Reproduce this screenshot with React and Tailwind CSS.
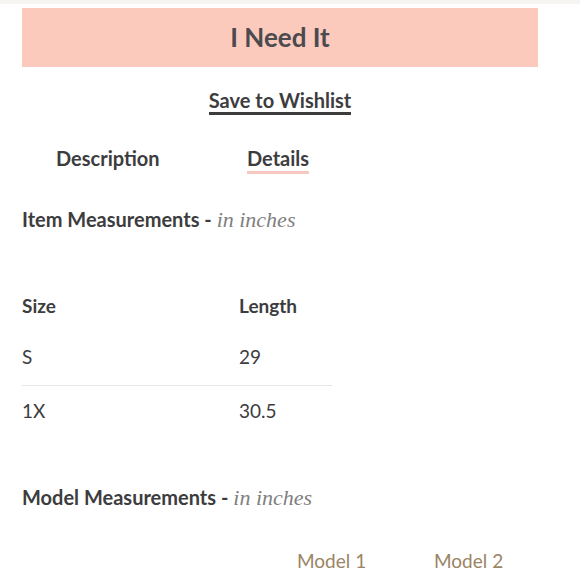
export default function App() {
  const sans = { fontFamily: '"Lato", "Noto Sans", sans-serif' };
  const serif = { fontFamily: '"Liberation Serif", "DejaVu Serif", serif' };
  return (
    <div className="w-[580px] h-[580px] overflow-hidden bg-white text-[#3d3c3e]" style={sans}>
      <div className="h-[4px] bg-[#f7f5f1]" />
      <div className="pl-[22px] pr-[42px] pt-[4px]">
        <div className="h-[59px] bg-[#fccabd] flex items-center justify-center">
          <span className="text-[26px] font-bold text-[#4b4a4f]">I Need It</span>
        </div>
        <div className="flex justify-center mt-[21px]">
          <span className="text-[20px] font-bold text-[#3d3c3e] border-b-[3px] border-[#3d3c3e] leading-[24px]">Save to Wishlist</span>
        </div>
        <div className="flex mt-[30px]">
          <div className="ml-[34px] w-[191px] text-[20px] font-bold leading-[26px]">Description</div>
          <div className="text-[20px] font-bold leading-[26px]">
            <span className="block border-b-[3px] border-[#f5c9c0]">Details</span>
          </div>
        </div>
        <div className="mt-[32px] h-[26px] text-[20px] font-bold leading-[26px]">
          Item Measurements - <span className="font-normal italic text-[#808080] text-[22px] leading-[20px]" style={serif}>in inches</span>
        </div>
        <div className="mt-[61px] w-[310px] text-[19px] leading-[26px]">
          <div className="flex h-[51px] items-start font-bold">
            <div className="w-[217px]">Size</div>
            <div>Length</div>
          </div>
          <div className="flex pb-[15px] border-b border-[#ece6e2]">
            <div className="w-[217px]">S</div>
            <div>29</div>
          </div>
          <div className="flex pt-[12px]">
            <div className="w-[217px]">1X</div>
            <div>30.5</div>
          </div>
        </div>
        <div className="mt-[60px] h-[26px] text-[20px] font-bold leading-[26px]">
          Model Measurements - <span className="font-normal italic text-[#808080] text-[22px] leading-[20px]" style={serif}>in inches</span>
        </div>
        <div className="flex mt-[38px] text-[19px] leading-[26px] text-[#9a8464]">
          <div className="ml-[275px] w-[137px]">Model 1</div>
          <div>Model 2</div>
        </div>
      </div>
    </div>
  );
}
